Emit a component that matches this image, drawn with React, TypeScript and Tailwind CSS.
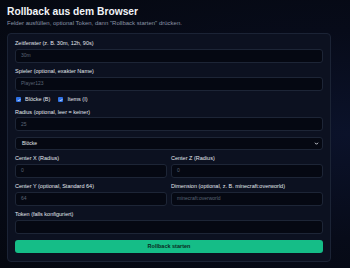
import React from "react";

const font = { fontFamily: '"Liberation Sans", Arial, sans-serif' };

function Field({ label, placeholder }: { label: string; placeholder?: string }) {
  return (
    <div className="flex flex-col gap-[1.5px] min-w-0">
      <label className="text-[5.5px] leading-[7px] h-[7px] text-[#e2e7ee] whitespace-nowrap">{label}</label>
      <div className="h-[14px] rounded-[3px] border border-[#1d2536] bg-[#050812] flex items-center pl-[5px]">
        <span className="text-[5px] text-[#5b6475] leading-none">{placeholder}</span>
      </div>
    </div>
  );
}

function Check({ label }: { label: string }) {
  return (
    <div className="flex items-center gap-[4px]">
      <span className="w-[5px] h-[5px] rounded-[1px] bg-[#2f72e6] flex items-center justify-center">
        <svg width="4" height="4" viewBox="0 0 10 10">
          <path d="M2 5.2 L4.2 7.4 L8.2 2.8" stroke="#fff" strokeWidth="1.8" fill="none" />
        </svg>
      </span>
      <span className="text-[5.5px] leading-[7px] text-[#e2e7ee]">{label}</span>
    </div>
  );
}

export default function App() {
  return (
    <div
      className="w-[350px] h-[268px] overflow-hidden bg-[radial-gradient(ellipse_at_100%_50%,#0b122a_0%,#070b19_55%,#050810_100%)] pl-[7px] pt-[5px]"
      style={font}
    >
      <h1 className="text-[10.25px] leading-[13px] font-bold text-[#f1f4f8]">Rollback aus dem Browser</h1>
      <p className="text-[6px] leading-[8px] text-[#8a93a5] mt-[1px]">
        Felder ausfüllen, optional Token, dann "Rollback starten" drücken.
      </p>
      <div className="mt-[6px] w-[324px] h-[229px] rounded-[4px] border border-[#1b2335] bg-[#0c1120] pt-[6px] px-[7px] pb-[8px] flex flex-col gap-[5.5px]">
        <Field label="Zeitfenster (z. B. 30m, 12h, 90s)" placeholder="30m" />
        <Field label="Spieler (optional, exakter Name)" placeholder="Player123" />
        <div className="h-[7px] flex items-center gap-[8px] pl-[1px]">
          <Check label="Blöcke (B)" />
          <Check label="Items (I)" />
        </div>
        <Field label="Radius (optional, leer = keiner)" placeholder="25" />
        <div className="h-[14px] rounded-[3px] border border-[#1d2536] bg-[#050812] flex items-center justify-between pl-[6px] pr-[3px]">
          <span className="text-[5px] text-[#e4e8ee] leading-none">Blöcke</span>
          <svg width="5" height="5" viewBox="0 0 10 10">
            <path d="M2 3.5 L5 6.5 L8 3.5" stroke="#e4e8ee" strokeWidth="1.8" fill="none" />
          </svg>
        </div>
        <div className="grid grid-cols-2 gap-[4px]">
          <Field label="Center X (Radius)" placeholder="0" />
          <Field label="Center Z (Radius)" placeholder="0" />
        </div>
        <div className="grid grid-cols-2 gap-[4px]">
          <Field label="Center Y (optional, Standard 64)" placeholder="64" />
          <Field label="Dimension (optional, z. B. minecraft:overworld)" placeholder="minecraft:overworld" />
        </div>
        <Field label="Token (falls konfiguriert)" />
        <button className="mt-[0.5px] h-[14px] rounded-[3px] bg-[#15bd87] text-[5.5px] font-bold text-[#0a2a1e] flex items-center justify-center">
          Rollback starten
        </button>
      </div>
    </div>
  );
}
